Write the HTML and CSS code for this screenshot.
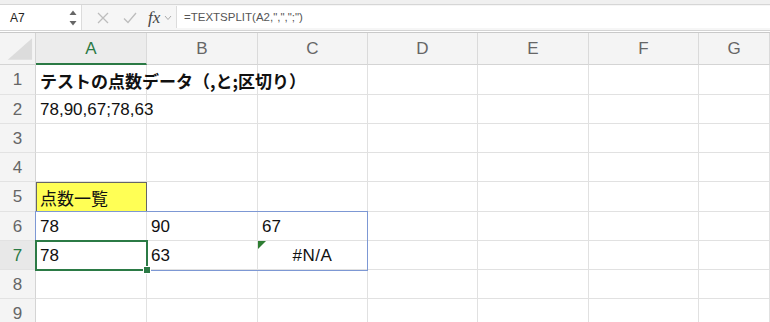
FILE: index.html
```html
<!DOCTYPE html>
<html lang="ja">
<head>
    <meta charset="UTF-8">
    <title>TEXTSPLIT</title>
    <link rel="stylesheet" href="styles.css">
</head>
<body>
<div class="toolbar-edge"></div>

<!-- Formula bar -->
<div class="formula-bar">
    <div class="name-box">
        <span class="name">A7</span>
        <svg class="spinner" width="8" height="18" viewBox="0 0 8 18">
            <path d="M0.5 6 L4 1.5 L7.5 6 Z" fill="#666"/>
            <path d="M0.5 12 L4 16.5 L7.5 12 Z" fill="#666"/>
        </svg>
    </div>
    <div class="fx-tools">
        <svg width="12" height="12" viewBox="0 0 12 12">
            <path d="M1 1 L11 11 M11 1 L1 11" stroke="#bdbdbd" stroke-width="1.3" fill="none"/>
        </svg>
        <svg width="14" height="12" viewBox="0 0 14 12">
            <path d="M1 6.5 L5 10.5 L13 1" stroke="#bdbdbd" stroke-width="1.3" fill="none"/>
        </svg>
        <span class="fx">fx</span>
        <svg class="chev" width="8" height="6" viewBox="0 0 8 6">
            <path d="M1 1 L4 4.5 L7 1" stroke="#aaa" stroke-width="1" fill="none"/>
        </svg>
    </div>
    <div class="formula-input">=TEXTSPLIT(A2,",",";")</div>
</div>
<div class="bar-gap"></div>

<!-- Sheet -->
<div class="sheet">
    <div class="corner">
        <svg width="36" height="31" viewBox="0 0 36 31">
            <path d="M8 27 L33 27 L33 5 Z" fill="#dcdcdc"/>
        </svg>
    </div>
    <div class="col-head active">A</div>
    <div class="col-head">B</div>
    <div class="col-head">C</div>
    <div class="col-head">D</div>
    <div class="col-head">E</div>
    <div class="col-head">F</div>
    <div class="col-head">G</div>

    <div class="row-head tall">1</div>
    <div class="cell bold">テストの点数データ（,と;区切り）</div>
    <div class="cell"></div><div class="cell"></div><div class="cell"></div>
    <div class="cell"></div><div class="cell"></div><div class="cell"></div>

    <div class="row-head">2</div>
    <div class="cell">78,90,67;78,63</div>
    <div class="cell"></div><div class="cell"></div><div class="cell"></div>
    <div class="cell"></div><div class="cell"></div><div class="cell"></div>

    <div class="row-head">3</div>
    <div class="cell"></div><div class="cell"></div><div class="cell"></div><div class="cell"></div>
    <div class="cell"></div><div class="cell"></div><div class="cell"></div>

    <div class="row-head">4</div>
    <div class="cell"></div><div class="cell"></div><div class="cell"></div><div class="cell"></div>
    <div class="cell"></div><div class="cell"></div><div class="cell"></div>

    <div class="row-head tall">5</div>
    <div class="cell yellow jp">点数一覧</div>
    <div class="cell"></div><div class="cell"></div><div class="cell"></div>
    <div class="cell"></div><div class="cell"></div><div class="cell"></div>

    <div class="row-head">6</div>
    <div class="cell">78<div class="range"></div></div>
    <div class="cell">90</div>
    <div class="cell">67</div>
    <div class="cell"></div><div class="cell"></div><div class="cell"></div><div class="cell"></div>

    <div class="row-head active">7</div>
    <div class="cell">78<div class="selection"><div class="fill-handle"></div></div></div>
    <div class="cell">63</div>
    <div class="cell center">#N/A<div class="error-mark"></div></div>
    <div class="cell"></div><div class="cell"></div><div class="cell"></div><div class="cell"></div>

    <div class="row-head">8</div>
    <div class="cell"></div><div class="cell"></div><div class="cell"></div><div class="cell"></div>
    <div class="cell"></div><div class="cell"></div><div class="cell"></div>

    <div class="row-head">9</div>
    <div class="cell"></div><div class="cell"></div><div class="cell"></div><div class="cell"></div>
    <div class="cell"></div><div class="cell"></div><div class="cell"></div>
</div>
</body>
</html>
```

FILE: styles.css
```css
body {
    margin: 0;
    background: #fff;
    font-family: "Liberation Sans", Arial, "Noto Sans CJK JP", sans-serif;
    overflow: hidden;
}
.toolbar-edge {
    height: 4px;
    background: #f0f0f0;
    border-bottom: 1px solid #d6d6d6;
}

/* formula bar */
.formula-bar {
    display: flex;
    height: 25px;
    background: #f6f6f6;
    border-bottom: 1px solid #d4d4d4;
}
.name-box {
    width: 82px;
    box-sizing: border-box;
    background: #fff;
    display: flex;
    align-items: center;
    justify-content: space-between;
    padding: 0 4px 0 10px;
    border-right: 1px solid #dcdcdc;
}
.name {
    font-size: 12px;
    color: #222;
}
.fx-tools {
    width: 94px;
    display: flex;
    align-items: center;
    padding-left: 15px;
    box-sizing: border-box;
}
.fx-tools svg:first-child {
    margin-right: 14px;
}
.fx-tools svg:nth-child(2) {
    margin-right: 11px;
}
.fx {
    font-family: "Liberation Serif", serif;
    font-style: italic;
    font-size: 17px;
    color: #444;
    margin-right: 4px;
}
.formula-input {
    flex: 1;
    background: #fff;
    border-left: 1px solid #dcdcdc;
    margin: 1px 0 2px 0;
    padding-left: 7px;
    font-size: 11.5px;
    color: #555;
    display: flex;
    align-items: center;
}
.bar-gap {
    height: 1px;
    background: #fff;
    border-bottom: 1px solid #c9c9c9;
}

/* sheet grid */
.sheet {
    display: grid;
    grid-template-columns: 36px 111px 111px 110px 110px 111px 110px 1fr;
    grid-template-rows: 32px 30px 29px 29px 29px 30px 29px 29px 29px 29px;
}
.corner,
.col-head,
.row-head {
    background: #f4f4f4;
    color: #666;
    box-sizing: border-box;
    font-size: 17px;
    display: flex;
    align-items: center;
    justify-content: center;
}
.corner {
    border-right: 1px solid #d4d4d4;
    border-bottom: 1px solid #d4d4d4;
}
.col-head {
    border-right: 1px solid #dadada;
    border-bottom: 1px solid #d4d4d4;
    padding-top: 1px;
}
.col-head.active {
    color: #2b7a45;
    background: #ececec;
    border-bottom: 2px solid #2b7a45;
}
.row-head {
    border-right: 1px solid #d4d4d4;
    border-bottom: 1px solid #e2e2e2;
    padding-top: 1px;
}
.row-head.active {
    color: #2b7a45;
    background: #e8e8e8;
}
.cell {
    position: relative;
    box-sizing: border-box;
    border-right: 1px solid #e1e1e1;
    border-bottom: 1px solid #e1e1e1;
    font-size: 17px;
    color: #111;
    padding: 2px 0 0 4px;
    display: flex;
    align-items: center;
    white-space: nowrap;
}
.cell.bold {
    font-family: "Noto Sans CJK JP", sans-serif;
    font-weight: bold;
    font-size: 17px;
    z-index: 1;
}
.cell.jp {
    font-family: "Noto Sans CJK JP", sans-serif;
    font-size: 17px;
}
.cell.yellow {
    background: #ffff55;
    border-right-color: #666;
    border-bottom-color: #666;
    box-shadow: inset 1px 1px 0 #666;
}
.cell.center {
    justify-content: center;
    padding-left: 0;
    letter-spacing: 0.5px;
}

/* overlays */
.range {
    position: absolute;
    left: -1px;
    top: -1px;
    width: 333px;
    height: 60px;
    box-sizing: border-box;
    border: 1px solid #7d98d4;
    z-index: 2;
}
.selection {
    position: absolute;
    left: -1px;
    top: -1px;
    right: -2px;
    bottom: -2px;
    border: 2px solid #2b7a45;
    z-index: 3;
}
.fill-handle {
    position: absolute;
    right: -5px;
    bottom: -5px;
    width: 6px;
    height: 6px;
    background: #2b7a45;
    border: 1px solid #fff;
}
.error-mark {
    position: absolute;
    left: 0;
    top: 0;
    width: 0;
    height: 0;
    border-top: 8px solid #2e7d32;
    border-right: 8px solid transparent;
}
```
